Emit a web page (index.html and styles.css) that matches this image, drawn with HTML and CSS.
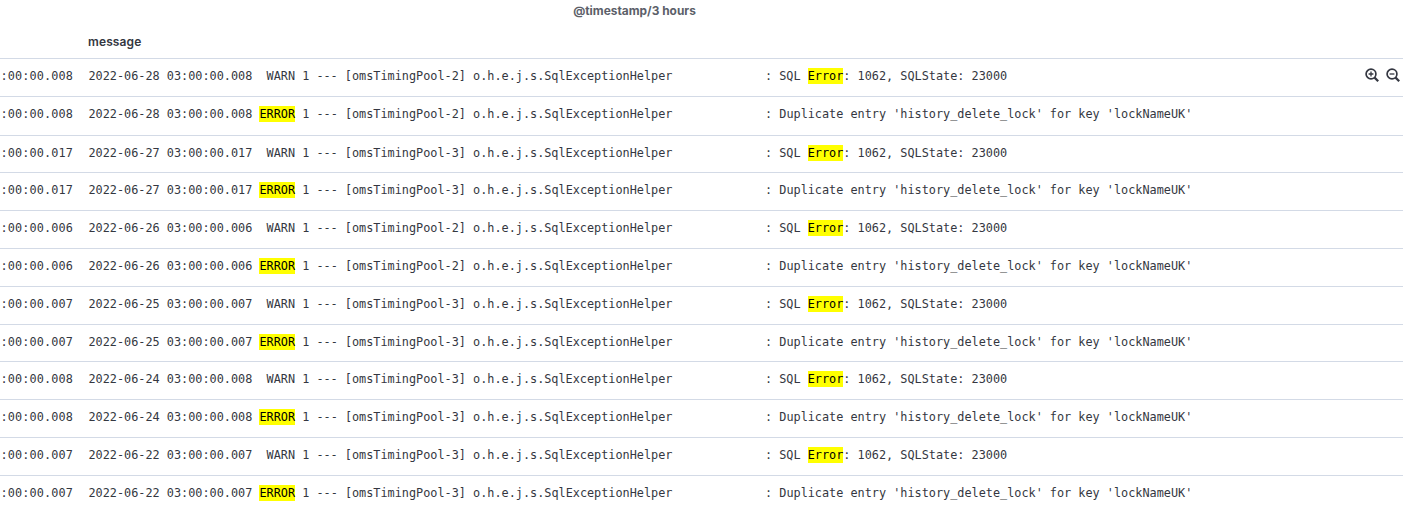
FILE: index.html
```html
<!DOCTYPE html>
<html lang="en"><head><meta charset="utf-8"><title>Logs</title><link rel="stylesheet" href="styles.css"></head>
<body>
<div class="chart-title">@timestamp/3 hours</div>
<div class="table">
  <div class="head"><div class="time-col"></div><div class="head-label">message</div></div>

  <div class="row">
    <div class="time-col"><span class="time">03:00:00.008</span></div>
    <div class="msg">2022-06-28 03:00:00.008  WARN 1 --- [omsTimingPool-2] o.h.e.j.s.SqlExceptionHelper             : SQL <mark>Error</mark>: 1062, SQLState: 23000</div>
    <div class="actions">
      <svg class="icon" viewBox="0 0 14 14"><circle cx="6" cy="6" r="4.9"/><path d="M9.6 9.6 13.2 13.2" class="handle"/><path d="M3.6 6h4.8M6 3.6v4.8" class="sign"/></svg>
      <svg class="icon" viewBox="0 0 14 14"><circle cx="6" cy="6" r="4.9"/><path d="M9.6 9.6 13.2 13.2" class="handle"/><path d="M3.6 6h4.8" class="sign"/></svg>
    </div>
  </div>
  <div class="row tall">
    <div class="time-col"><span class="time">03:00:00.008</span></div>
    <div class="msg">2022-06-28 03:00:00.008 <mark>ERROR</mark> 1 --- [omsTimingPool-2] o.h.e.j.s.SqlExceptionHelper             : Duplicate entry 'history_delete_lock' for key 'lockNameUK'</div>
  </div>
  <div class="row short">
    <div class="time-col"><span class="time">03:00:00.017</span></div>
    <div class="msg">2022-06-27 03:00:00.017  WARN 1 --- [omsTimingPool-3] o.h.e.j.s.SqlExceptionHelper             : SQL <mark>Error</mark>: 1062, SQLState: 23000</div>
  </div>
  <div class="row">
    <div class="time-col"><span class="time">03:00:00.017</span></div>
    <div class="msg">2022-06-27 03:00:00.017 <mark>ERROR</mark> 1 --- [omsTimingPool-3] o.h.e.j.s.SqlExceptionHelper             : Duplicate entry 'history_delete_lock' for key 'lockNameUK'</div>
  </div>
  <div class="row">
    <div class="time-col"><span class="time">03:00:00.006</span></div>
    <div class="msg">2022-06-26 03:00:00.006  WARN 1 --- [omsTimingPool-2] o.h.e.j.s.SqlExceptionHelper             : SQL <mark>Error</mark>: 1062, SQLState: 23000</div>
  </div>
  <div class="row">
    <div class="time-col"><span class="time">03:00:00.006</span></div>
    <div class="msg">2022-06-26 03:00:00.006 <mark>ERROR</mark> 1 --- [omsTimingPool-2] o.h.e.j.s.SqlExceptionHelper             : Duplicate entry 'history_delete_lock' for key 'lockNameUK'</div>
  </div>
  <div class="row">
    <div class="time-col"><span class="time">03:00:00.007</span></div>
    <div class="msg">2022-06-25 03:00:00.007  WARN 1 --- [omsTimingPool-3] o.h.e.j.s.SqlExceptionHelper             : SQL <mark>Error</mark>: 1062, SQLState: 23000</div>
  </div>
  <div class="row short">
    <div class="time-col"><span class="time">03:00:00.007</span></div>
    <div class="msg">2022-06-25 03:00:00.007 <mark>ERROR</mark> 1 --- [omsTimingPool-3] o.h.e.j.s.SqlExceptionHelper             : Duplicate entry 'history_delete_lock' for key 'lockNameUK'</div>
  </div>
  <div class="row">
    <div class="time-col"><span class="time">03:00:00.008</span></div>
    <div class="msg">2022-06-24 03:00:00.008  WARN 1 --- [omsTimingPool-3] o.h.e.j.s.SqlExceptionHelper             : SQL <mark>Error</mark>: 1062, SQLState: 23000</div>
  </div>
  <div class="row">
    <div class="time-col"><span class="time">03:00:00.008</span></div>
    <div class="msg">2022-06-24 03:00:00.008 <mark>ERROR</mark> 1 --- [omsTimingPool-3] o.h.e.j.s.SqlExceptionHelper             : Duplicate entry 'history_delete_lock' for key 'lockNameUK'</div>
  </div>
  <div class="row">
    <div class="time-col"><span class="time">03:00:00.007</span></div>
    <div class="msg">2022-06-22 03:00:00.007  WARN 1 --- [omsTimingPool-3] o.h.e.j.s.SqlExceptionHelper             : SQL <mark>Error</mark>: 1062, SQLState: 23000</div>
  </div>
  <div class="row">
    <div class="time-col"><span class="time">03:00:00.007</span></div>
    <div class="msg">2022-06-22 03:00:00.007 <mark>ERROR</mark> 1 --- [omsTimingPool-3] o.h.e.j.s.SqlExceptionHelper             : Duplicate entry 'history_delete_lock' for key 'lockNameUK'</div>
  </div>
</div>
</body></html>
```
FILE: styles.css
```css
html, body { margin: 0; padding: 0; background: #fff; overflow: hidden; }
body { font-family: Inter, "Liberation Sans", sans-serif; color: #343741; }

.chart-title {
  height: 22px;
  line-height: 22px;
  padding-right: 134px;
  text-align: center;
  font-size: 11.9px;
  font-weight: 700;
  color: #5c5f69;
}

.head { display: flex; height: 36px; }
.head-label { font-size: 12px; font-weight: 600; line-height: 40px; letter-spacing: .12px; color: #343741; }

.time-col {
  flex: 0 0 88px;
  width: 88px;
  display: flex;
  justify-content: flex-end;
  padding-right: 15px;
  box-sizing: border-box;
  overflow: hidden;
}
.time { flex: none; letter-spacing: .12px; }

.row {
  display: flex;
  height: 38px;
  box-sizing: border-box;
  border-top: 1px solid #d3dae6;
  padding-top: 9px;
  font-family: "DejaVu Sans Mono", "Liberation Mono", monospace;
  font-size: 11.83px;
  line-height: 16px;
  color: #343741;
  white-space: pre;
}
.row.tall { height: 39px; }
.row.short { height: 37px; }

.msg { flex: 1; min-width: 0; padding-left: .5px; }

mark { background: #ff0; color: #000; padding: 1px 0; }

.actions { display: flex; gap: 7px; padding-right: 3px; flex: none; }
.icon { width: 14px; height: 14px; fill: none; stroke: #343741; display: block; }
.icon circle { stroke-width: 1.7; }
.icon .handle { stroke-width: 2.2; }
.icon .sign { stroke-width: 1.3; }
```
